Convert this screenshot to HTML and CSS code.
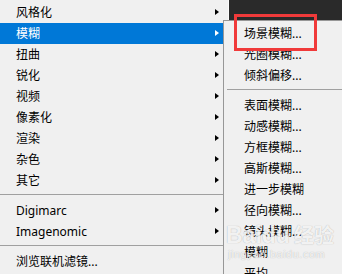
FILE: index.html
```html
<!DOCTYPE html>
<html lang="zh-CN">

<head>
    <meta charset="UTF-8">
    <title>滤镜菜单</title>
    <link rel="stylesheet" href="styles.css">
</head>

<body>
    <div class="menu">
        <div class="item has-sub">风格化</div>
        <div class="item has-sub active">模糊</div>
        <div class="item has-sub">扭曲</div>
        <div class="item has-sub">锐化</div>
        <div class="item has-sub">视频</div>
        <div class="item has-sub">像素化</div>
        <div class="item has-sub">渲染</div>
        <div class="item has-sub">杂色</div>
        <div class="item has-sub">其它</div>
        <div class="sep"></div>
        <div class="item has-sub latin">Digimarc</div>
        <div class="item has-sub latin">Imagenomic</div>
        <div class="sep"></div>
        <div class="item">浏览联机滤镜...</div>
    </div>
    <div class="backdrop"></div>

    <!-- blur submenu, popped out over the main menu -->
    <div class="submenu">
        <div class="item">场景模糊...</div>
        <div class="item">光圈模糊...</div>
        <div class="item">倾斜偏移...</div>
        <div class="sep"></div>
        <div class="item">表面模糊...</div>
        <div class="item">动感模糊...</div>
        <div class="item">方框模糊...</div>
        <div class="item">高斯模糊...</div>
        <div class="item">进一步模糊</div>
        <div class="item">径向模糊...</div>
        <div class="item">镜头模糊...</div>
        <div class="item">模糊</div>
        <div class="item">平均</div>
    </div>

    <div class="highlight-box"></div>

    <div class="watermark">
        <div class="wm-logo">Baidu<span class="wm-cn">经验</span></div>
        <div class="wm-url">jingyan.baidu.com</div>
    </div>
</body>

</html>
```

FILE: styles.css
```css
body {
    margin: 0;
    width: 342px;
    height: 274px;
    overflow: hidden;
    display: flex;
    font-family: "Noto Sans", "Noto Sans CJK SC", sans-serif;
    font-size: 12px;
    color: #000;
    background-color: #f0f0f0;
}

.menu {
    width: 228px;
    flex-shrink: 0;
    padding-top: 2px;
    background-color: #f0f0f0;
    border-right: 1px solid #fafafa;
}

.backdrop {
    flex: 1;
    background-color: #2a2a2a;
}

.item {
    height: 21px;
    line-height: 21px;
    padding-left: 16px;
    white-space: nowrap;
    position: relative;
}

.menu .item {
    width: 207px; /* stops where the submenu covers it */
}

.item.active {
    background-color: #0078d7;
    color: #fff;
}

/* little black triangle for items with a submenu */
.has-sub::after {
    content: "";
    position: absolute;
    left: 215px;
    top: 7px;
    border-top: 3.5px solid transparent;
    border-bottom: 3.5px solid transparent;
    border-left: 4px solid #000;
}

.has-sub.active::after {
    border-left-color: #fff;
}

.sep {
    height: 9px;
    position: relative;
}

.sep::before {
    content: "";
    position: absolute;
    left: 0;
    right: 0;
    top: 3px;
    border-top: 1px solid #a0a0a0;
}

.submenu {
    position: absolute;
    left: 223px;
    top: 20px;
    right: 0;
    bottom: 0;
    padding-top: 2px;
    background-color: #f0f0f0;
    border-left: 1px solid #979797;
    border-top: 1px solid #979797;
}

.submenu .item {
    padding-left: 20px;
}

.submenu .sep::before {
    left: 3px;
}

/* red annotation frame */
.highlight-box {
    position: absolute;
    left: 234px;
    top: 14px;
    width: 77px;
    height: 31px;
    border: 3px solid #f03a3a;
}

.watermark {
    position: absolute;
    left: 226px;
    top: 222px;
    color: rgba(255, 255, 255, 0.85);
    text-shadow: 0 0 1px rgba(0, 0, 0, 0.3);
}

.wm-logo {
    font-family: "Liberation Sans", sans-serif;
    font-weight: bold;
    font-size: 23px;
    line-height: 26px;
}

.wm-cn {
    font-family: "Noto Sans CJK SC", sans-serif;
    font-size: 20px;
    margin-left: 4px;
}

.wm-url {
    font-family: "Liberation Sans", sans-serif;
    font-size: 11px;
    line-height: 12px;
    letter-spacing: 0.5px;
    padding-left: 2px;
}
```
